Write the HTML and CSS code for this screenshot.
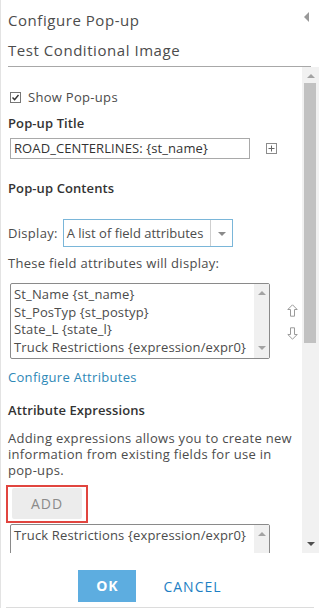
FILE: index.html
```html
<!DOCTYPE html>
<html lang="en">
<head>
    <meta charset="UTF-8">
    <meta name="viewport" content="width=device-width, initial-scale=1.0">
    <title>Configure Pop-up</title>
    <link rel="stylesheet" href="styles.css">
</head>
<body>

<div class="panel">
    <!-- Header -->
    <div class="head">
        <div class="head-title">Configure Pop-up</div>
        <div class="head-layer">Test Conditional Image</div>
        <span class="collapse"></span>
    </div>

    <!-- Scrolling body -->
    <div class="body">
        <div class="main">
            <label class="check-row">
                <span class="checkbox">
                    <svg width="9" height="9" viewBox="0 0 9 9"><path d="M1.5 4.5 L3.6 6.6 L7.5 2" fill="none" stroke="#333" stroke-width="1.4"/></svg>
                </span>
                Show Pop-ups
            </label>

            <div class="section-title t-title">Pop-up Title</div>
            <div class="title-row">
                <div class="text-input">ROAD_CENTERLINES: {st_name}</div>
                <span class="plus-btn">
                    <svg width="11" height="11" viewBox="0 0 11 11"><rect x="0.5" y="0.5" width="10" height="10" fill="#fff" stroke="#8c8c8c"/><path d="M5.5 2.5 V8.5 M2.5 5.5 H8.5" stroke="#666" stroke-width="1"/></svg>
                </span>
            </div>

            <div class="section-title t-contents">Pop-up Contents</div>
            <div class="display-row">
                <span>Display:</span>
                <div class="select">
                    <span class="select-text">A list of field attributes</span>
                    <span class="select-arrow"></span>
                </div>
            </div>

            <div class="text t-fields">These field attributes will display:</div>
            <div class="fields-row">
                <div class="listbox">
                    <div class="list-items">
                        <div>St_Name {st_name}</div>
                        <div>St_PosTyp {st_postyp}</div>
                        <div>State_L {state_l}</div>
                        <div>Truck Restrictions {expression/expr0}</div>
                    </div>
                    <div class="list-scroll">
                        <span class="tri-up small"></span>
                        <span class="tri-down small"></span>
                    </div>
                </div>
                <div class="move-btns">
                    <svg width="11" height="13" viewBox="0 0 11 13"><path d="M5.5 0.8 L10.2 5.5 H7.5 V12.2 H3.5 V5.5 H0.8 Z" fill="#fff" stroke="#9a9a9a"/></svg>
                    <svg width="11" height="13" viewBox="0 0 11 13"><path d="M5.5 12.2 L10.2 7.5 H7.5 V0.8 H3.5 V7.5 H0.8 Z" fill="#fff" stroke="#9a9a9a"/></svg>
                </div>
            </div>

            <a class="link" href="#">Configure Attributes</a>

            <div class="section-title t-expr">Attribute Expressions</div>
            <div class="text para">Adding expressions allows you to create new information from existing fields for use in <span class="nowrap">pop-ups.</span></div>

            <div class="add-outline">
                <div class="add-btn">ADD</div>
            </div>

            <div class="listbox expr-list">
                <div class="list-items">
                    <div>Truck Restrictions {expression/expr0}</div>
                </div>
                <div class="list-scroll">
                    <span class="tri-up small"></span>
                </div>
            </div>
        </div>

        <div class="vscroll">
            <span class="tri-up"></span>
            <div class="thumb"></div>
            <span class="tri-down bottom"></span>
        </div>
    </div>

    <!-- Footer -->
    <div class="foot">
        <div class="foot-btns">
            <div class="btn-ok">OK</div>
            <div class="btn-cancel">CANCEL</div>
        </div>
    </div>
</div>

</body>
</html>
```

FILE: styles.css
```css
/* Base */
html, body {
    margin: 0;
    padding: 0;
    background: #fff;
}
body {
    font-family: "Open Sans", Lato, sans-serif;
    font-size: 13px;
    letter-spacing: 0.3px;
    color: #4c4c4c;
}
.panel {
    width: 319px;
    height: 608px;
    box-sizing: border-box;
    border-left: 1px solid #e3e3e3;
    position: relative;
    overflow: hidden;
}
.nowrap {
    white-space: nowrap;
}

/* Header */
.head {
    position: relative;
    margin: 0 8px 0 7px;
    padding-top: 10px;
    padding-bottom: 6px;
    border-bottom: 1px solid #a8a8a8;
    font-size: 15px;
    letter-spacing: 0.55px;
}
.head-title {
    line-height: 20px;
}
.head-layer {
    line-height: 20px;
    margin-top: 10px;
}
.collapse {
    position: absolute;
    right: 2px;
    top: 12px;
    width: 0;
    height: 0;
    border-top: 5px solid transparent;
    border-bottom: 5px solid transparent;
    border-right: 5px solid #999;
}

/* Body */
.body {
    display: flex;
    height: 486px;
    overflow: hidden;
}
.main {
    width: 301px;
    padding-left: 7px;
    box-sizing: border-box;
}
.text, .section-title, .check-row, .link {
    line-height: 17px;
}
.section-title {
    color: #333;
    font-weight: 600;
    letter-spacing: 0.1px;
}

.check-row {
    display: flex;
    align-items: center;
    margin-top: 22px;
    color: #4c4c4c;
}
.checkbox {
    width: 11px;
    height: 11px;
    border: 1px solid #767676;
    box-sizing: border-box;
    display: flex;
    align-items: center;
    justify-content: center;
    margin: 0 7px 0 2px;
}

.t-title { margin-top: 9px; }
.title-row {
    display: flex;
    align-items: center;
    margin-top: 6px;
}
.text-input {
    width: 240px;
    height: 21px;
    box-sizing: border-box;
    border: 1px solid #a9a9a9;
    margin-left: 2px;
    padding-left: 3px;
    line-height: 19px;
    color: #333;
    letter-spacing: 0.1px;
}
.plus-btn {
    display: flex;
    margin-left: 16px;
}

.t-contents { margin-top: 21px; }
.display-row {
    display: flex;
    align-items: center;
    margin-top: 22px;
}
.select {
    display: flex;
    align-items: center;
    margin-left: 5px;
    width: 170px;
    height: 28px;
    box-sizing: border-box;
    border: 1px solid #7ab6d9;
}
.select-text {
    flex: 1;
    padding-left: 3px;
    border-right: 1px solid #cfcfcf;
    line-height: 26px;
    height: 26px;
    letter-spacing: 0;
    white-space: nowrap;
    overflow: hidden;
}
.select-arrow {
    width: 0;
    height: 0;
    margin: 2px 6px 0 7px;
    border-left: 4px solid transparent;
    border-right: 4px solid transparent;
    border-top: 4px solid #8a8a8a;
}

.t-fields { margin-top: 8px; }
.fields-row {
    display: flex;
    margin-top: 11px;
}
.listbox {
    display: flex;
    width: 260px;
    height: 76px;
    box-sizing: border-box;
    border: 1px solid #8a8a8a;
    margin-left: 2px;
    border-radius: 2px;
}
.list-items {
    flex: 1;
    padding: 2px 0 0 3px;
    line-height: 17.7px;
    letter-spacing: 0.15px;
    white-space: nowrap;
    overflow: hidden;
}
.list-scroll {
    width: 15px;
    background: #f0f0f0;
    position: relative;
}
.move-btns {
    display: flex;
    flex-direction: column;
    gap: 10px;
    margin: 21px 0 0 17px;
}

/* Triangles for scrollbars */
.tri-up, .tri-down {
    position: absolute;
    left: 50%;
    margin-left: -4px;
    width: 0;
    height: 0;
    border-left: 4px solid transparent;
    border-right: 4px solid transparent;
}
.tri-up {
    top: 7px;
    border-bottom: 4px solid #a3a3a3;
}
.tri-down {
    bottom: 7px;
    border-top: 4px solid #a3a3a3;
}
.list-scroll .tri-up { top: 7px; }
.list-scroll .tri-down { bottom: 8px; }

.link {
    display: block;
    margin-top: 10px;
    color: #2e88b7;
    text-decoration: none;
}

.t-expr { margin-top: 16px; }
.para {
    margin-top: 11px;
    line-height: 16px;
    width: 292px;
}

.add-outline {
    width: 82px;
    height: 38px;
    box-sizing: border-box;
    border: 2px solid #e1453f;
    margin: 7px 0 0 -2px;
    padding: 1px 0 0 4px;
}
.add-btn {
    width: 70px;
    height: 31px;
    background: #ececec;
    border-radius: 2px;
    color: #8a8a8a;
    font-size: 14px;
    letter-spacing: 1px;
    line-height: 31px;
    text-align: center;
}

.expr-list {
    margin-top: 1px;
    height: 40px;
}

/* Outer scrollbar */
.vscroll {
    position: relative;
    width: 17px;
    background: #f1f1f1;
}
.vscroll .tri-up {
    top: 7px;
    border-bottom-color: #a3a3a3;
}
.vscroll .thumb {
    position: absolute;
    left: 2px;
    top: 16px;
    width: 12px;
    height: 260px;
    background: #c1c1c1;
}
.vscroll .tri-down {
    bottom: 7px;
    border-top-color: #505050;
}

/* Footer */
.foot {
    margin: 0 5px 0 5px;
    height: 55px;
    border-bottom: 1px solid #dcdcdc;
    box-sizing: border-box;
}
.foot-btns {
    display: flex;
    justify-content: center;
    align-items: center;
    padding: 17px 20px 0 0;
    gap: 27px;
}
.btn-ok {
    width: 58px;
    height: 32px;
    background: #5dade0;
    color: #fff;
    font-weight: 700;
    font-size: 14px;
    letter-spacing: 1px;
    line-height: 32px;
    text-align: center;
}
.btn-cancel {
    color: #1e7fc4;
    font-size: 14px;
    letter-spacing: 1px;
}
```
